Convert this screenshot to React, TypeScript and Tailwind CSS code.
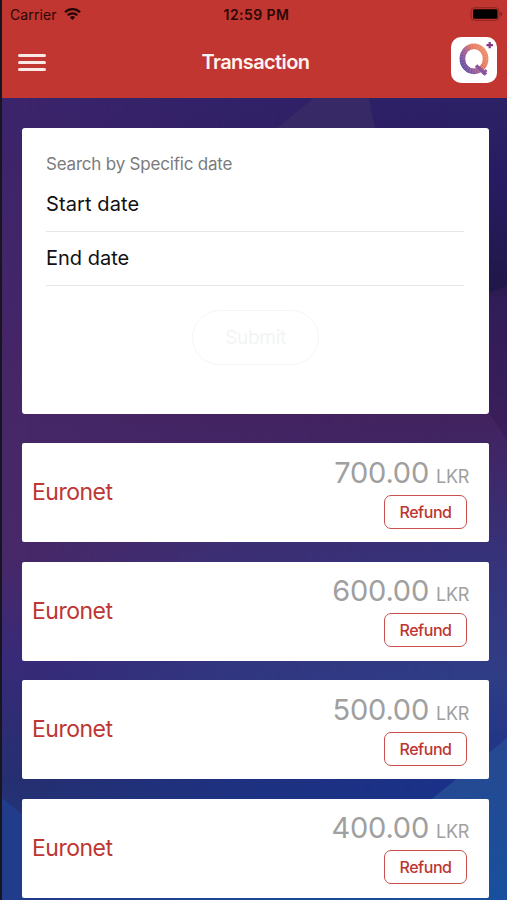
type Transaction = {
  id: number
  merchant: string
  amount: string
}

const TRANSACTIONS: Transaction[] = [
  { id: 1, merchant: 'Euronet', amount: '700.00' },
  { id: 2, merchant: 'Euronet', amount: '600.00' },
  { id: 3, merchant: 'Euronet', amount: '500.00' },
  { id: 4, merchant: 'Euronet', amount: '400.00' },
]

function WifiIcon() {
  return (
    <svg width="17" height="12" viewBox="0 0 17 12" fill="none" stroke="#250505" strokeWidth="2.3">
      <path d="M1 4.3a10.6 10.6 0 0 1 15 0" />
      <path d="M3.7 7.3a6.8 6.8 0 0 1 9.6 0" />
      <path d="M8.5 12 5.9 9.4a3.7 3.7 0 0 1 5.2 0z" fill="#250505" stroke="none" />
    </svg>
  )
}

function BatteryIcon() {
  return (
    <svg width="33" height="14" viewBox="0 0 33 14" fill="none">
      <rect x="1" y="0.7" width="28" height="12.6" rx="3.5" stroke="#8f241f" strokeWidth="1" />
      <rect x="3" y="2.2" width="24.5" height="9.6" rx="1.5" fill="#000" />
      <path d="M30.5 5v4c1.3-.5 1.6-1.2 1.6-2s-.3-1.5-1.6-2z" fill="#7d1d18" />
    </svg>
  )
}

function StatusBar() {
  return (
    <div className="grid h-7 grid-cols-3 items-center pr-[4px] pl-[8px] text-[#2b0706]">
      <div className="flex items-center gap-[7px] text-[14px] tracking-[0.1px]">
        <span>Carrier</span>
        <WifiIcon />
      </div>
      <span className="text-center text-[14px] font-semibold tracking-[0.45px]">12:59 PM</span>
      <div className="flex justify-end pb-[1px]">
        <BatteryIcon />
      </div>
    </div>
  )
}

function AppLogo() {
  return (
    <svg width="46" height="46" viewBox="0 0 46 46" fill="none">
      <defs>
        <linearGradient id="q-ring" x1="9" y1="30" x2="36" y2="14" gradientUnits="userSpaceOnUse">
          <stop offset="0" stopColor="#584aa5" />
          <stop offset="0.4" stopColor="#a06098" />
          <stop offset="0.65" stopColor="#e5795f" />
          <stop offset="1" stopColor="#ee9270" />
        </linearGradient>
      </defs>
      <rect width="46" height="46" rx="10" fill="#fff" />
      <ellipse cx="23" cy="21.8" rx="11.6" ry="12.6" stroke="url(#q-ring)" strokeWidth="5.6" />
      <ellipse
        cx="23"
        cy="21.8"
        rx="11.6"
        ry="12.6"
        stroke="#fff"
        strokeOpacity="0.14"
        strokeWidth="4.6"
        strokeDasharray="1 1.8"
      />
      <path d="m25 28.5 10 9" stroke="#8b559f" strokeWidth="3.6" />
      <path d="m31.5 37 4-4" stroke="#8b559f" strokeWidth="2.6" />
      <path d="M38.7 4.9v6.4M35.5 8.1h6.4" stroke="#863580" strokeWidth="2.2" />
    </svg>
  )
}

function NavBar() {
  return (
    <div className="grid h-[70px] grid-cols-[1fr_auto_1fr] items-center pr-[10px] pb-1 pl-[16px]">
      <button aria-label="Menu" className="flex w-[28px] flex-col gap-[4.5px] pt-[3px]">
        <span className="h-[2.6px] rounded-full bg-[#fbe9e8]" />
        <span className="h-[2.6px] rounded-full bg-[#fbe9e8]" />
        <span className="h-[2.6px] rounded-full bg-[#fbe9e8]" />
      </button>
      <h1 className="pt-[2px] pr-[4px] text-[20px] font-semibold tracking-[-0.6px] text-[#fff3f0]">Transaction</h1>
      <div className="flex justify-end pb-[3px]">
        <AppLogo />
      </div>
    </div>
  )
}

function SearchCard() {
  return (
    <section className="h-[286px] rounded-[3px] bg-white px-[25px] pt-[24px]">
      <p className="-ml-px text-[17px] leading-[24px] tracking-[-0.2px] text-[#7b7b7b]">Search by Specific date</p>
      <div className="-ml-px h-[56px] border-b border-[#e7e7e7] pt-[14px] text-[20px] leading-[28px] tracking-[0.1px] text-[#111]">
        Start date
      </div>
      <div className="-ml-px h-[54px] border-b border-[#e7e7e7] pt-[12px] text-[20px] leading-[28px] text-[#111]">
        End date
      </div>
      <button className="mx-auto mt-[24px] block h-[55px] w-[127px] rounded-full border border-[#f5f5f5] pt-[2px] text-[19px] tracking-[-0.3px] text-[#f2f4f4]">
        Submit
      </button>
    </section>
  )
}

function TransactionCard({ merchant, amount }: Omit<Transaction, 'id'>) {
  return (
    <li className="flex h-[99px] items-center justify-between rounded-[2px] bg-white pr-[20px] pl-[10px]">
      <span className="text-[23px] tracking-[-0.5px] text-[#bd3632]">{merchant}</span>
      <div className="flex flex-col items-end pb-[2px]">
        <p className="flex items-baseline gap-[7px] leading-[36px] text-[#a0a0a0]">
          <span className="text-[29px] font-[370] tracking-[-0.2px]">{amount}</span>
          <span className="text-[18px] font-[370] tracking-[-0.3px]">LKR</span>
        </p>
        <button className="mr-[2px] h-[34px] w-[83px] rounded-[7px] border-[1.5px] border-[#c9504c] text-[16px] font-medium tracking-[-0.45px] text-[#bd3632]">
          Refund
        </button>
      </div>
    </li>
  )
}

// Faceted gradient behind the cards
function Backdrop() {
  return (
    <svg
      className="absolute inset-0 h-full w-full"
      viewBox="0 0 505 802"
      preserveAspectRatio="none"
      fill="none"
    >
      <defs>
        <linearGradient id="base" x1="0" y1="0" x2="0" y2="802" gradientUnits="userSpaceOnUse">
          <stop offset="0" stopColor="#3b246b" />
          <stop offset="0.35" stopColor="#452667" />
          <stop offset="0.57" stopColor="#472868" />
          <stop offset="0.7" stopColor="#382a78" />
          <stop offset="0.85" stopColor="#252f70" />
          <stop offset="1" stopColor="#203b8b" />
        </linearGradient>
        <linearGradient id="right" x1="0" y1="0" x2="0" y2="802" gradientUnits="userSpaceOnUse">
          <stop offset="0" stopColor="#2d2166" />
          <stop offset="0.1" stopColor="#281b63" />
          <stop offset="0.24" stopColor="#211747" />
          <stop offset="0.25" stopColor="#2b1e58" />
          <stop offset="0.4" stopColor="#43225f" />
          <stop offset="0.57" stopColor="#36327a" />
          <stop offset="0.72" stopColor="#2f3d86" />
          <stop offset="0.86" stopColor="#1a3188" />
          <stop offset="1" stopColor="#184f9c" />
        </linearGradient>
        <linearGradient id="facet" x1="430" y1="660" x2="505" y2="802" gradientUnits="userSpaceOnUse">
          <stop offset="0" stopColor="#28488f" />
          <stop offset="1" stopColor="#17509e" />
        </linearGradient>
        <linearGradient id="fade" x1="0" y1="0" x2="505" y2="0" gradientUnits="userSpaceOnUse">
          <stop offset="0.05" stopColor="#fff" stopOpacity="0" />
          <stop offset="0.45" stopColor="#fff" stopOpacity="0.65" />
          <stop offset="0.9" stopColor="#fff" />
        </linearGradient>
        <mask id="side">
          <rect width="505" height="802" fill="url(#fade)" />
        </mask>
      </defs>
      <rect width="505" height="802" fill="url(#base)" />
      <rect width="505" height="802" fill="url(#right)" mask="url(#side)" />
      <path d="M275 30 312 0h55l6 30z" fill="#372866" />
      <path d="M487 194l18-6v154l-18-27z" fill="#331d59" fillOpacity="0.6" />
      <path d="M0 700l20 16v86H0z" fill="#223c8c" />
      <path d="M425 705l80-65v162h-80z" fill="url(#facet)" />
    </svg>
  )
}

export default function App() {
  return (
    <div className="flex h-[900px] w-[507px] flex-col overflow-hidden border-l-2 border-[#17151f] font-['Inter',sans-serif]">
      <header className="h-[98px] shrink-0 bg-[#c13630]">
        <StatusBar />
        <NavBar />
      </header>
      <main className="relative flex-1 overflow-hidden">
        <Backdrop />
        <div className="relative pt-[30px] pr-[18px] pl-[20px]">
          <SearchCard />
          <ul className="mt-[29px] flex flex-col gap-[19.5px]">
            {TRANSACTIONS.map((t) => (
              <TransactionCard key={t.id} merchant={t.merchant} amount={t.amount} />
            ))}
          </ul>
        </div>
      </main>
    </div>
  )
}
